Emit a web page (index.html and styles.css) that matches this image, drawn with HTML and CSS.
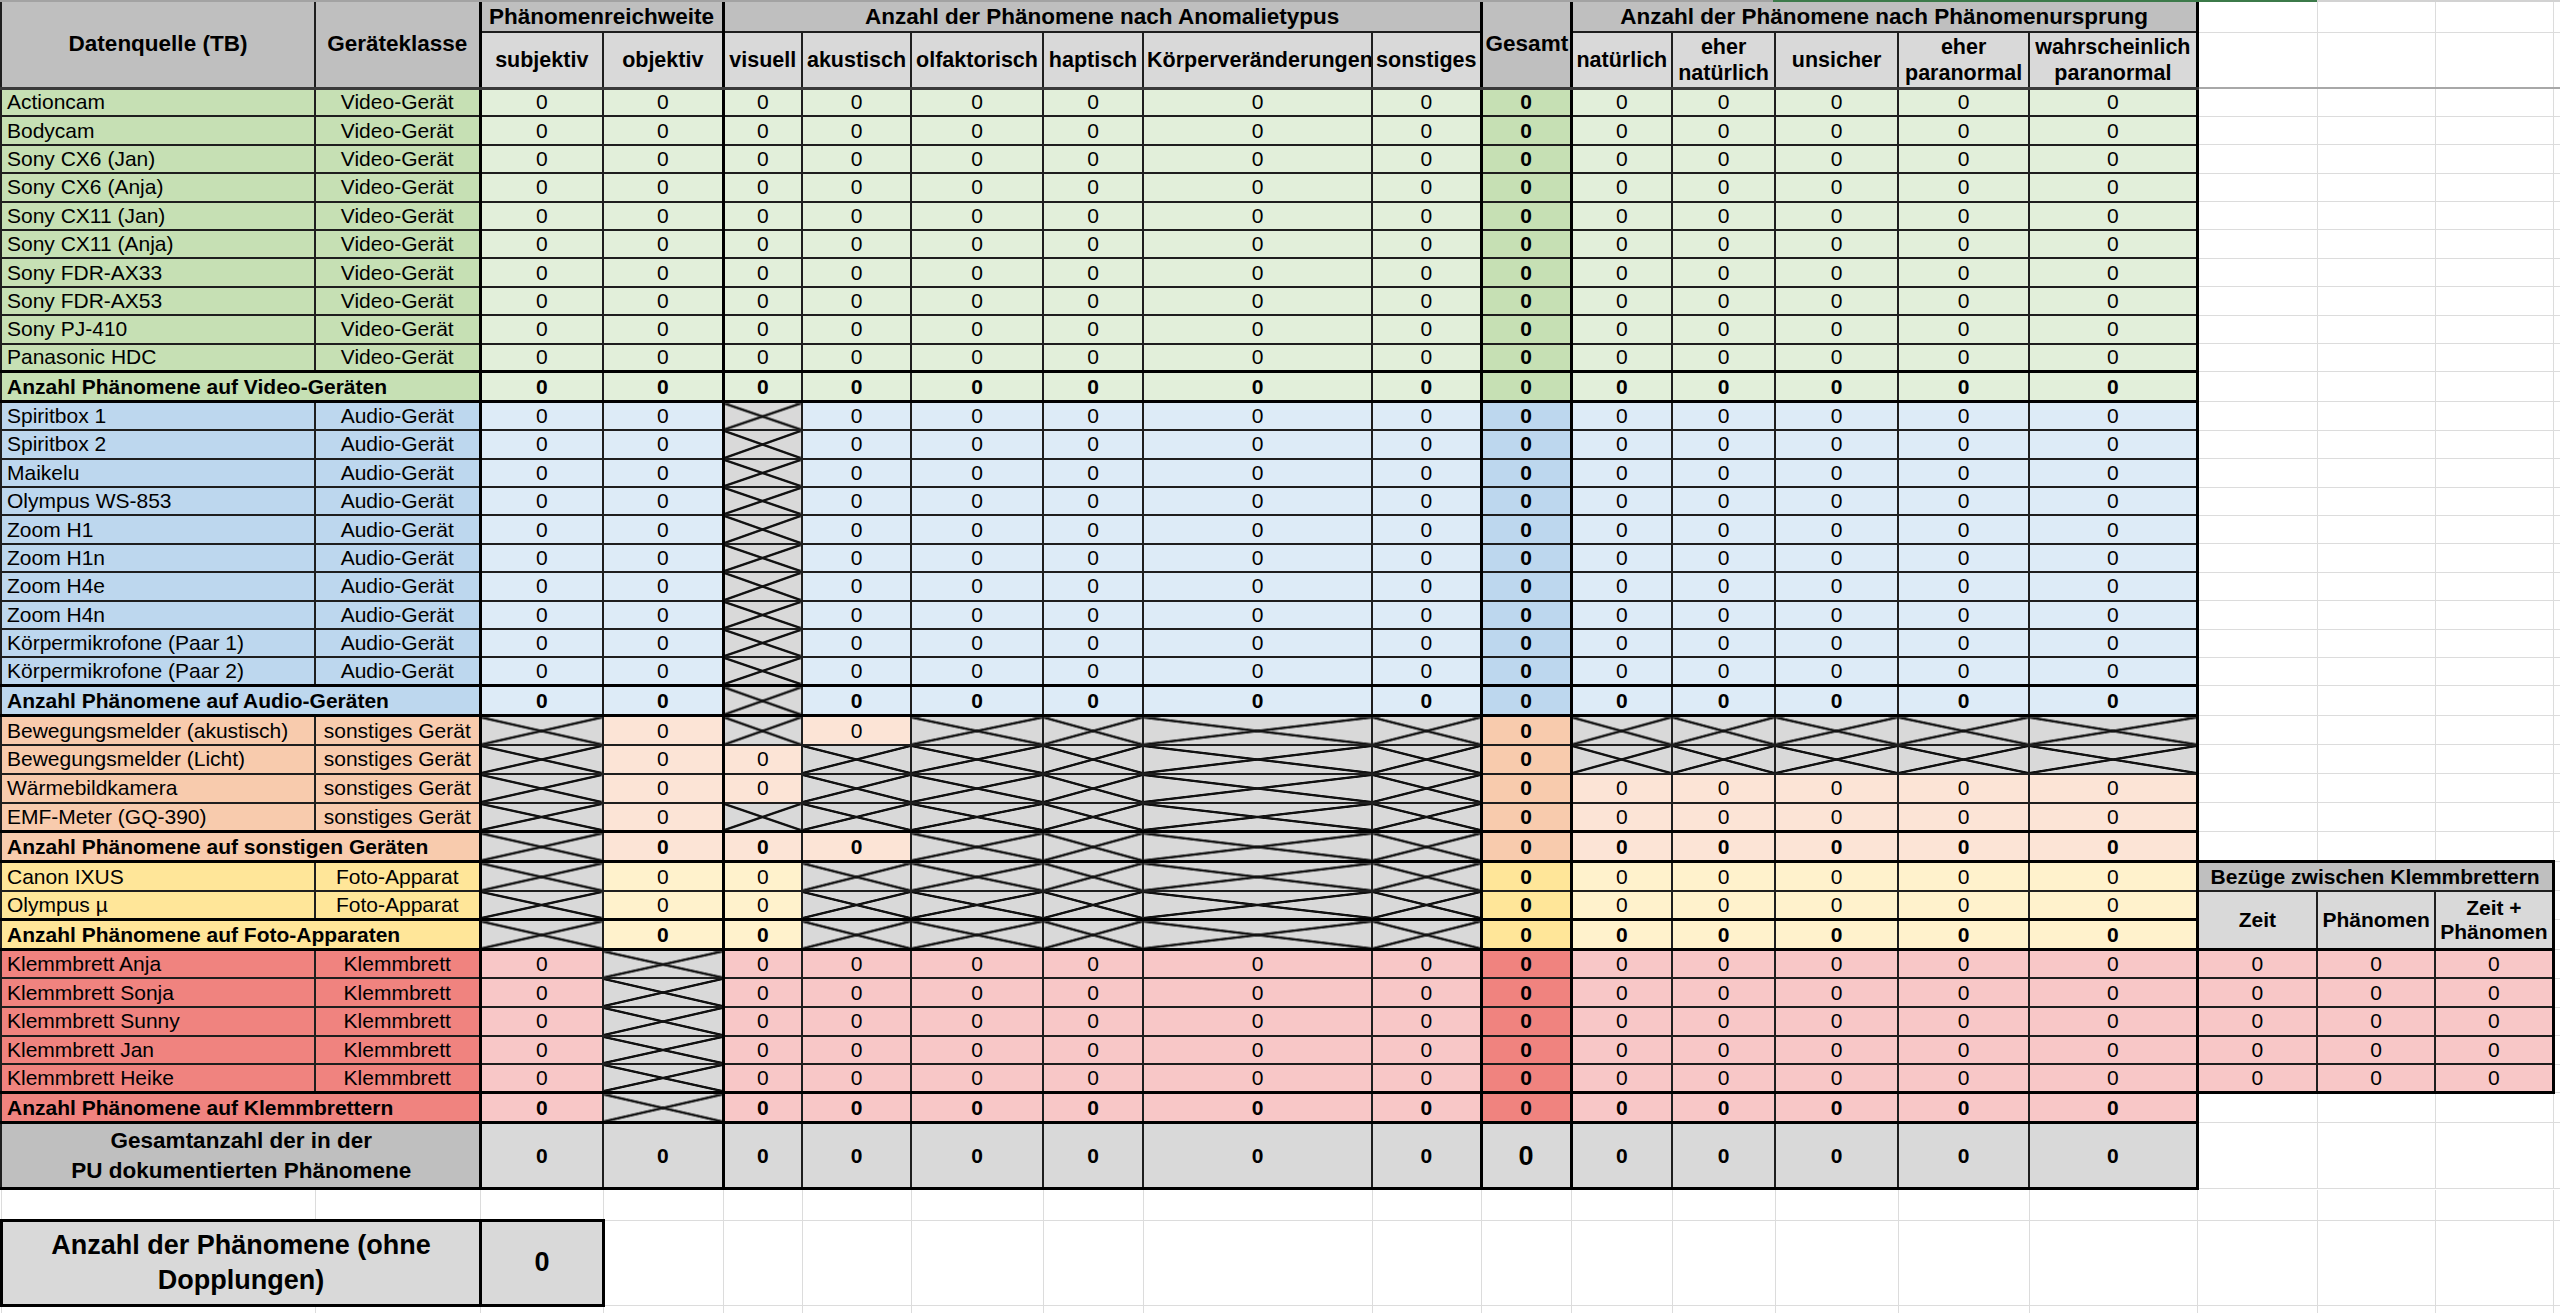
FILE: index.html
```html
<!DOCTYPE html>
<html lang="de">
<head>
<meta charset="utf-8">
<title>Phänomene</title>
<link rel="stylesheet" href="styles.css">
</head>
<body>
<div class="topbar"></div>
<table class="sheet">
<colgroup>
<col class="cA"><col class="cB"><col class="cC tl"><col class="cD"><col class="cE tl"><col class="cF"><col class="cG"><col class="cH"><col class="cI"><col class="cJ"><col class="cK tl"><col class="cL tl"><col class="cM"><col class="cN"><col class="cO"><col class="cP"><col class="cQ tl"><col class="cR"><col class="cS"><col class="cT">
</colgroup>
<tr class="h1">
<td class="hd" rowspan="2">Datenquelle (TB)</td><td class="hd" rowspan="2">Geräteklasse</td><td class="hd" colspan="2">Phänomenreichweite</td><td class="hd" colspan="6">Anzahl der Phänomene nach Anomalietypus</td><td class="hd" rowspan="2">Gesamt</td><td class="hd" colspan="5">Anzahl der Phänomene nach Phänomenursprung</td><td class="g"></td><td class="g"></td><td class="g"></td><td class="g"></td>
</tr>
<tr class="h2">
<td class="sh">subjektiv</td><td class="sh">objektiv</td><td class="sh">visuell</td><td class="sh">akustisch</td><td class="sh">olfaktorisch</td><td class="sh">haptisch</td><td class="sh">Körperveränderungen</td><td class="sh">sonstiges</td><td class="sh">natürlich</td><td class="sh">eher<br>natürlich</td><td class="sh">unsicher</td><td class="sh">eher<br>paranormal</td><td class="sh">wahrscheinlich<br>paranormal</td><td class="g"></td><td class="g"></td><td class="g"></td><td class="g"></td>
</tr>
<tr class="vid"><td class="lab">Actioncam</td><td class="lab c">Video-Gerät</td><td>0</td><td>0</td><td>0</td><td>0</td><td>0</td><td>0</td><td>0</td><td>0</td><td class="k">0</td><td>0</td><td>0</td><td>0</td><td>0</td><td>0</td><td class="g"></td><td class="g"></td><td class="g"></td><td class="g"></td></tr>
<tr class="vid"><td class="lab">Bodycam</td><td class="lab c">Video-Gerät</td><td>0</td><td>0</td><td>0</td><td>0</td><td>0</td><td>0</td><td>0</td><td>0</td><td class="k">0</td><td>0</td><td>0</td><td>0</td><td>0</td><td>0</td><td class="g"></td><td class="g"></td><td class="g"></td><td class="g"></td></tr>
<tr class="vid"><td class="lab">Sony CX6 (Jan)</td><td class="lab c">Video-Gerät</td><td>0</td><td>0</td><td>0</td><td>0</td><td>0</td><td>0</td><td>0</td><td>0</td><td class="k">0</td><td>0</td><td>0</td><td>0</td><td>0</td><td>0</td><td class="g"></td><td class="g"></td><td class="g"></td><td class="g"></td></tr>
<tr class="vid"><td class="lab">Sony CX6 (Anja)</td><td class="lab c">Video-Gerät</td><td>0</td><td>0</td><td>0</td><td>0</td><td>0</td><td>0</td><td>0</td><td>0</td><td class="k">0</td><td>0</td><td>0</td><td>0</td><td>0</td><td>0</td><td class="g"></td><td class="g"></td><td class="g"></td><td class="g"></td></tr>
<tr class="vid"><td class="lab">Sony CX11 (Jan)</td><td class="lab c">Video-Gerät</td><td>0</td><td>0</td><td>0</td><td>0</td><td>0</td><td>0</td><td>0</td><td>0</td><td class="k">0</td><td>0</td><td>0</td><td>0</td><td>0</td><td>0</td><td class="g"></td><td class="g"></td><td class="g"></td><td class="g"></td></tr>
<tr class="vid"><td class="lab">Sony CX11 (Anja)</td><td class="lab c">Video-Gerät</td><td>0</td><td>0</td><td>0</td><td>0</td><td>0</td><td>0</td><td>0</td><td>0</td><td class="k">0</td><td>0</td><td>0</td><td>0</td><td>0</td><td>0</td><td class="g"></td><td class="g"></td><td class="g"></td><td class="g"></td></tr>
<tr class="vid"><td class="lab">Sony FDR-AX33</td><td class="lab c">Video-Gerät</td><td>0</td><td>0</td><td>0</td><td>0</td><td>0</td><td>0</td><td>0</td><td>0</td><td class="k">0</td><td>0</td><td>0</td><td>0</td><td>0</td><td>0</td><td class="g"></td><td class="g"></td><td class="g"></td><td class="g"></td></tr>
<tr class="vid"><td class="lab">Sony FDR-AX53</td><td class="lab c">Video-Gerät</td><td>0</td><td>0</td><td>0</td><td>0</td><td>0</td><td>0</td><td>0</td><td>0</td><td class="k">0</td><td>0</td><td>0</td><td>0</td><td>0</td><td>0</td><td class="g"></td><td class="g"></td><td class="g"></td><td class="g"></td></tr>
<tr class="vid"><td class="lab">Sony PJ-410</td><td class="lab c">Video-Gerät</td><td>0</td><td>0</td><td>0</td><td>0</td><td>0</td><td>0</td><td>0</td><td>0</td><td class="k">0</td><td>0</td><td>0</td><td>0</td><td>0</td><td>0</td><td class="g"></td><td class="g"></td><td class="g"></td><td class="g"></td></tr>
<tr class="vid"><td class="lab">Panasonic HDC</td><td class="lab c">Video-Gerät</td><td>0</td><td>0</td><td>0</td><td>0</td><td>0</td><td>0</td><td>0</td><td>0</td><td class="k">0</td><td>0</td><td>0</td><td>0</td><td>0</td><td>0</td><td class="g"></td><td class="g"></td><td class="g"></td><td class="g"></td></tr>
<tr class="vid sum"><td class="lab" colspan="2">Anzahl Phänomene auf Video-Geräten</td><td>0</td><td>0</td><td>0</td><td>0</td><td>0</td><td>0</td><td>0</td><td>0</td><td class="k">0</td><td>0</td><td>0</td><td>0</td><td>0</td><td>0</td><td class="g"></td><td class="g"></td><td class="g"></td><td class="g"></td></tr>
<tr class="aud"><td class="lab">Spiritbox 1</td><td class="lab c">Audio-Gerät</td><td>0</td><td>0</td><td class="x"></td><td>0</td><td>0</td><td>0</td><td>0</td><td>0</td><td class="k">0</td><td>0</td><td>0</td><td>0</td><td>0</td><td>0</td><td class="g"></td><td class="g"></td><td class="g"></td><td class="g"></td></tr>
<tr class="aud"><td class="lab">Spiritbox 2</td><td class="lab c">Audio-Gerät</td><td>0</td><td>0</td><td class="x"></td><td>0</td><td>0</td><td>0</td><td>0</td><td>0</td><td class="k">0</td><td>0</td><td>0</td><td>0</td><td>0</td><td>0</td><td class="g"></td><td class="g"></td><td class="g"></td><td class="g"></td></tr>
<tr class="aud"><td class="lab">Maikelu</td><td class="lab c">Audio-Gerät</td><td>0</td><td>0</td><td class="x"></td><td>0</td><td>0</td><td>0</td><td>0</td><td>0</td><td class="k">0</td><td>0</td><td>0</td><td>0</td><td>0</td><td>0</td><td class="g"></td><td class="g"></td><td class="g"></td><td class="g"></td></tr>
<tr class="aud"><td class="lab">Olympus WS-853</td><td class="lab c">Audio-Gerät</td><td>0</td><td>0</td><td class="x"></td><td>0</td><td>0</td><td>0</td><td>0</td><td>0</td><td class="k">0</td><td>0</td><td>0</td><td>0</td><td>0</td><td>0</td><td class="g"></td><td class="g"></td><td class="g"></td><td class="g"></td></tr>
<tr class="aud"><td class="lab">Zoom H1</td><td class="lab c">Audio-Gerät</td><td>0</td><td>0</td><td class="x"></td><td>0</td><td>0</td><td>0</td><td>0</td><td>0</td><td class="k">0</td><td>0</td><td>0</td><td>0</td><td>0</td><td>0</td><td class="g"></td><td class="g"></td><td class="g"></td><td class="g"></td></tr>
<tr class="aud"><td class="lab">Zoom H1n</td><td class="lab c">Audio-Gerät</td><td>0</td><td>0</td><td class="x"></td><td>0</td><td>0</td><td>0</td><td>0</td><td>0</td><td class="k">0</td><td>0</td><td>0</td><td>0</td><td>0</td><td>0</td><td class="g"></td><td class="g"></td><td class="g"></td><td class="g"></td></tr>
<tr class="aud"><td class="lab">Zoom H4e</td><td class="lab c">Audio-Gerät</td><td>0</td><td>0</td><td class="x"></td><td>0</td><td>0</td><td>0</td><td>0</td><td>0</td><td class="k">0</td><td>0</td><td>0</td><td>0</td><td>0</td><td>0</td><td class="g"></td><td class="g"></td><td class="g"></td><td class="g"></td></tr>
<tr class="aud"><td class="lab">Zoom H4n</td><td class="lab c">Audio-Gerät</td><td>0</td><td>0</td><td class="x"></td><td>0</td><td>0</td><td>0</td><td>0</td><td>0</td><td class="k">0</td><td>0</td><td>0</td><td>0</td><td>0</td><td>0</td><td class="g"></td><td class="g"></td><td class="g"></td><td class="g"></td></tr>
<tr class="aud"><td class="lab">Körpermikrofone (Paar 1)</td><td class="lab c">Audio-Gerät</td><td>0</td><td>0</td><td class="x"></td><td>0</td><td>0</td><td>0</td><td>0</td><td>0</td><td class="k">0</td><td>0</td><td>0</td><td>0</td><td>0</td><td>0</td><td class="g"></td><td class="g"></td><td class="g"></td><td class="g"></td></tr>
<tr class="aud"><td class="lab">Körpermikrofone (Paar 2)</td><td class="lab c">Audio-Gerät</td><td>0</td><td>0</td><td class="x"></td><td>0</td><td>0</td><td>0</td><td>0</td><td>0</td><td class="k">0</td><td>0</td><td>0</td><td>0</td><td>0</td><td>0</td><td class="g"></td><td class="g"></td><td class="g"></td><td class="g"></td></tr>
<tr class="aud sum"><td class="lab" colspan="2">Anzahl Phänomene auf Audio-Geräten</td><td>0</td><td>0</td><td class="x"></td><td>0</td><td>0</td><td>0</td><td>0</td><td>0</td><td class="k">0</td><td>0</td><td>0</td><td>0</td><td>0</td><td>0</td><td class="g"></td><td class="g"></td><td class="g"></td><td class="g"></td></tr>
<tr class="son"><td class="lab">Bewegungsmelder (akustisch)</td><td class="lab c">sonstiges Gerät</td><td class="x"></td><td>0</td><td class="x"></td><td>0</td><td class="x"></td><td class="x"></td><td class="x"></td><td class="x"></td><td class="k">0</td><td class="x"></td><td class="x"></td><td class="x"></td><td class="x"></td><td class="x"></td><td class="g"></td><td class="g"></td><td class="g"></td><td class="g"></td></tr>
<tr class="son"><td class="lab">Bewegungsmelder (Licht)</td><td class="lab c">sonstiges Gerät</td><td class="x"></td><td>0</td><td>0</td><td class="x"></td><td class="x"></td><td class="x"></td><td class="x"></td><td class="x"></td><td class="k">0</td><td class="x"></td><td class="x"></td><td class="x"></td><td class="x"></td><td class="x"></td><td class="g"></td><td class="g"></td><td class="g"></td><td class="g"></td></tr>
<tr class="son"><td class="lab">Wärmebildkamera</td><td class="lab c">sonstiges Gerät</td><td class="x"></td><td>0</td><td>0</td><td class="x"></td><td class="x"></td><td class="x"></td><td class="x"></td><td class="x"></td><td class="k">0</td><td>0</td><td>0</td><td>0</td><td>0</td><td>0</td><td class="g"></td><td class="g"></td><td class="g"></td><td class="g"></td></tr>
<tr class="son"><td class="lab">EMF-Meter (GQ-390)</td><td class="lab c">sonstiges Gerät</td><td class="x"></td><td>0</td><td class="x"></td><td class="x"></td><td class="x"></td><td class="x"></td><td class="x"></td><td class="x"></td><td class="k">0</td><td>0</td><td>0</td><td>0</td><td>0</td><td>0</td><td class="g"></td><td class="g"></td><td class="g"></td><td class="g"></td></tr>
<tr class="son sum"><td class="lab" colspan="2">Anzahl Phänomene auf sonstigen Geräten</td><td class="x"></td><td>0</td><td>0</td><td>0</td><td class="x"></td><td class="x"></td><td class="x"></td><td class="x"></td><td class="k">0</td><td>0</td><td>0</td><td>0</td><td>0</td><td>0</td><td class="g"></td><td class="g"></td><td class="g"></td><td class="g"></td></tr>
<tr class="fot"><td class="lab">Canon IXUS</td><td class="lab c">Foto-Apparat</td><td class="x"></td><td>0</td><td>0</td><td class="x"></td><td class="x"></td><td class="x"></td><td class="x"></td><td class="x"></td><td class="k">0</td><td>0</td><td>0</td><td>0</td><td>0</td><td>0</td><td class="bzh" colspan="3">Bezüge zwischen Klemmbrettern</td><td class="g"></td></tr>
<tr class="fot"><td class="lab">Olympus µ</td><td class="lab c">Foto-Apparat</td><td class="x"></td><td>0</td><td>0</td><td class="x"></td><td class="x"></td><td class="x"></td><td class="x"></td><td class="x"></td><td class="k">0</td><td>0</td><td>0</td><td>0</td><td>0</td><td>0</td><td class="bzs" rowspan="2">Zeit</td><td class="bzs" rowspan="2">Phänomen</td><td class="bzs re" rowspan="2">Zeit +<br>Phänomen</td><td class="g"></td></tr>
<tr class="fot sum"><td class="lab" colspan="2">Anzahl Phänomene auf Foto-Apparaten</td><td class="x"></td><td>0</td><td>0</td><td class="x"></td><td class="x"></td><td class="x"></td><td class="x"></td><td class="x"></td><td class="k">0</td><td>0</td><td>0</td><td>0</td><td>0</td><td>0</td><td class="g"></td></tr>
<tr class="kle"><td class="lab">Klemmbrett Anja</td><td class="lab c">Klemmbrett</td><td>0</td><td class="x"></td><td>0</td><td>0</td><td>0</td><td>0</td><td>0</td><td>0</td><td class="k">0</td><td>0</td><td>0</td><td>0</td><td>0</td><td>0</td><td>0</td><td>0</td><td class="re">0</td><td class="g"></td></tr>
<tr class="kle"><td class="lab">Klemmbrett Sonja</td><td class="lab c">Klemmbrett</td><td>0</td><td class="x"></td><td>0</td><td>0</td><td>0</td><td>0</td><td>0</td><td>0</td><td class="k">0</td><td>0</td><td>0</td><td>0</td><td>0</td><td>0</td><td>0</td><td>0</td><td class="re">0</td><td class="g"></td></tr>
<tr class="kle"><td class="lab">Klemmbrett Sunny</td><td class="lab c">Klemmbrett</td><td>0</td><td class="x"></td><td>0</td><td>0</td><td>0</td><td>0</td><td>0</td><td>0</td><td class="k">0</td><td>0</td><td>0</td><td>0</td><td>0</td><td>0</td><td>0</td><td>0</td><td class="re">0</td><td class="g"></td></tr>
<tr class="kle"><td class="lab">Klemmbrett Jan</td><td class="lab c">Klemmbrett</td><td>0</td><td class="x"></td><td>0</td><td>0</td><td>0</td><td>0</td><td>0</td><td>0</td><td class="k">0</td><td>0</td><td>0</td><td>0</td><td>0</td><td>0</td><td>0</td><td>0</td><td class="re">0</td><td class="g"></td></tr>
<tr class="kle"><td class="lab">Klemmbrett Heike</td><td class="lab c">Klemmbrett</td><td>0</td><td class="x"></td><td>0</td><td>0</td><td>0</td><td>0</td><td>0</td><td>0</td><td class="k">0</td><td>0</td><td>0</td><td>0</td><td>0</td><td>0</td><td class="bb">0</td><td class="bb">0</td><td class="bb re">0</td><td class="g"></td></tr>
<tr class="kle sum"><td class="lab" colspan="2">Anzahl Phänomene auf Klemmbrettern</td><td>0</td><td class="x"></td><td>0</td><td>0</td><td>0</td><td>0</td><td>0</td><td>0</td><td class="k">0</td><td>0</td><td>0</td><td>0</td><td>0</td><td>0</td><td class="g"></td><td class="g"></td><td class="g"></td><td class="g"></td></tr>
<tr class="tot"><td class="lab" colspan="2">Gesamtanzahl der in der<br>PU dokumentierten Phänomene</td><td>0</td><td>0</td><td>0</td><td>0</td><td>0</td><td>0</td><td>0</td><td>0</td><td class="k big">0</td><td>0</td><td>0</td><td>0</td><td>0</td><td>0</td><td class="g"></td><td class="g"></td><td class="g"></td><td class="g"></td></tr>
</table>
<table class="sheet lower">
<colgroup>
<col class="cA"><col class="cB"><col class="cC"><col class="cD"><col class="cE"><col class="cF"><col class="cG"><col class="cH"><col class="cI"><col class="cJ"><col class="cK"><col class="cL"><col class="cM"><col class="cN"><col class="cO"><col class="cP"><col class="cQ"><col class="cR"><col class="cS"><col class="cT">
</colgroup>
<tr class="gap"><td class="g"></td><td class="g"></td><td class="g"></td><td class="g"></td><td class="g"></td><td class="g"></td><td class="g"></td><td class="g"></td><td class="g"></td><td class="g"></td><td class="g"></td><td class="g"></td><td class="g"></td><td class="g"></td><td class="g"></td><td class="g"></td><td class="g"></td><td class="g"></td><td class="g"></td><td class="g"></td></tr>
<tr class="ohne"><td class="ohl" colspan="2">Anzahl der Phänomene (ohne<br>Dopplungen)</td><td class="ohv">0</td><td class="g"></td><td class="g"></td><td class="g"></td><td class="g"></td><td class="g"></td><td class="g"></td><td class="g"></td><td class="g"></td><td class="g"></td><td class="g"></td><td class="g"></td><td class="g"></td><td class="g"></td><td class="g"></td><td class="g"></td><td class="g"></td></tr>
<tr class="last"><td class="g"></td><td class="g"></td><td class="g"></td><td class="g"></td><td class="g"></td><td class="g"></td><td class="g"></td><td class="g"></td><td class="g"></td><td class="g"></td><td class="g"></td><td class="g"></td><td class="g"></td><td class="g"></td><td class="g"></td><td class="g"></td><td class="g"></td><td class="g"></td><td class="g"></td><td class="g"></td></tr>
</table>
</body>
</html>
```

FILE: styles.css
```css
* { box-sizing: border-box; }
html, body { margin: 0; padding: 0; background: #fff; overflow: hidden; }
body {
  font-family: "Liberation Sans", Arial, sans-serif;
  font-size: 21px;
  color: #000;
  width: 2560px;
  height: 1313px;
}
.topbar {
  height: 2px;
  background: linear-gradient(to right, #a3a3a3 0 1773px, #3c7a4a 1773px 2317px, #d2d2d2 2317px);
}

.sheet {
  border-collapse: collapse;
  table-layout: fixed;
  width: 2652px;
}
.cA { width: 314px; } .cB { width: 165px; } .cC { width: 123px; } .cD { width: 120px; }
.cE { width: 79px; } .cF { width: 109px; } .cG { width: 132px; } .cH { width: 100px; }
.cI { width: 229px; } .cJ { width: 109px; } .cK { width: 90px; } .cL { width: 101px; }
.cM { width: 103px; } .cN { width: 123px; } .cO { width: 131px; } .cP { width: 168px; }
.cQ { width: 120px; } .cR { width: 118px; } .cS { width: 118px; } .cT { width: 100px; }
col.tl { border-left: 3px solid #000; }

.sheet td {
  border: 2px solid #1e1e1e;
  padding: 0 3px;
  text-align: center;
  vertical-align: middle;
  line-height: 24px;
  white-space: nowrap;
  overflow: hidden;
}
.sheet td.g { border: 1px solid #dcdcdc; background: #fff; }

/* header */
.h1 { height: 30px; }
.h2 { height: 56px; }
.sheet .h1 td { border-top: 0; }
.sheet td.hd { background: #bfbfbf; font-weight: bold; font-size: 22.5px; }
.sheet td.sh { background: #d9d9d9; font-weight: bold; font-size: 21.5px; line-height: 26px; }
.sheet td.hd[rowspan], .sheet td.sh { border-bottom: 3px solid #3a3a3a; }
.sheet .h2 td.g { border-bottom: 2px solid #a8a8a8; }

/* rows */
.vid, .aud { height: 28.4px; }
.son, .fot { height: 29px; }
.kle { height: 28.6px; }
.sum { height: 30px; }
.tot { height: 66px; }

.sheet td.lab { text-align: left; padding-left: 5px; }
.sheet td.lab.c { text-align: center; padding: 0 2px; }
.sheet td.k { font-weight: bold; }
.sheet tr.sum td, .sheet tr.tot td { font-weight: bold; }
.sheet tr.sum td:not(.g), .sheet tr.tot td:not(.g) { border-top: 3px solid #000; border-bottom: 3px solid #000; }

.vid td { background: #e2efda; }
.vid td.lab, .vid td.k { background: #c6e0b4; }
.aud td { background: #ddebf7; }
.aud td.lab, .aud td.k { background: #bdd7ee; }
.son td { background: #fce4d6; }
.son td.lab, .son td.k { background: #f8cbad; }
.fot td { background: #fff2cc; }
.fot td.lab, .fot td.k { background: #ffe699; }
.kle td { background: #f8c7c7; }
.kle td.lab, .kle td.k { background: #f0837f; }
.tot td { background: #d9d9d9; }
.tot td.lab { background: #bfbfbf; text-align: center; font-size: 22.5px; line-height: 30px; }
.tot td.k { background: #d9d9d9; }
.sheet td.big { font-size: 27px; }

.sheet td.x {
  background:
    linear-gradient(to top right, transparent calc(50% - 1.6px), #111 calc(50% - 0.8px), #111 calc(50% + 0.8px), transparent calc(50% + 1.6px)),
    linear-gradient(to bottom right, transparent calc(50% - 1.6px), #111 calc(50% - 0.8px), #111 calc(50% + 0.8px), transparent calc(50% + 1.6px)),
    #d9d9d9;
}

/* Bezüge box */
.sheet td.bzh { background: #bfbfbf; font-weight: bold; border-top: 3px solid #000; border-right: 3px solid #000; }
.sheet td.bzs { background: #d9d9d9; font-weight: bold; border-bottom: 3px solid #000; }
.sheet td.re { border-right: 3px solid #000; }
.sheet td.bb { border-bottom: 3px solid #000; }

/* lower part */
.lower .gap { height: 30px; }
.lower .gap td { border-top: 0; }
.lower .ohne { height: 85px; }
.lower .last { height: 40px; }
.sheet td.ohl, .sheet td.ohv {
  background: #d9d9d9;
  border: 3px solid #000;
  font-weight: bold;
  font-size: 27px;
  line-height: 35px;
}
```
